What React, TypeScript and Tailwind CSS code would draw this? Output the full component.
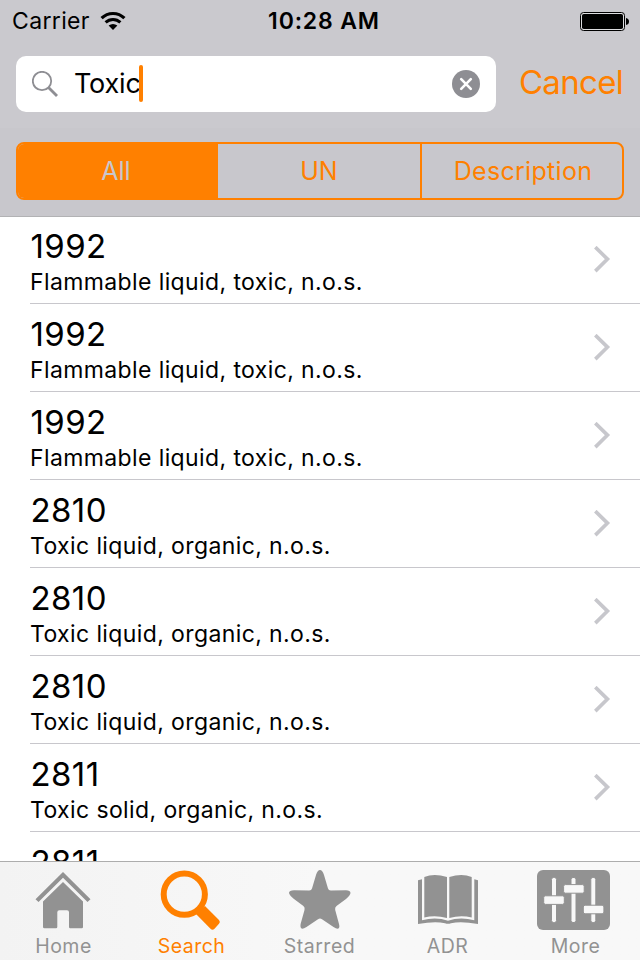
import type { ReactNode } from "react";

const results = [
  ["1992", "Flammable liquid, toxic, n.o.s."],
  ["1992", "Flammable liquid, toxic, n.o.s."],
  ["1992", "Flammable liquid, toxic, n.o.s."],
  ["2810", "Toxic liquid, organic, n.o.s."],
  ["2810", "Toxic liquid, organic, n.o.s."],
  ["2810", "Toxic liquid, organic, n.o.s."],
  ["2811", "Toxic solid, organic, n.o.s."],
  ["2811", "Toxic solid, organic, n.o.s."],
];

function StatusBar() {
  return (
    <div className="grid h-10 grid-cols-[1fr_auto_1fr] items-center pr-[11px] pl-3 text-[23px] leading-10">
      <div className="flex items-center gap-[10px]">
        <span className="w-[78px] tracking-[0.35px] whitespace-nowrap">Carrier</span>
        <svg width="26" height="20" viewBox="0 0 26 20" fill="none" stroke="#000">
          <path d="M1.6 7.2C8 .9 18 .9 24.4 7.2" strokeWidth="3.2" />
          <path d="M5.6 11.4C9.8 7.4 16.2 7.4 20.4 11.4" strokeWidth="3" />
          <path d="M8.6 14.6Q13 11.2 17.4 14.6L13 19Z" fill="#000" stroke="none" />
        </svg>
      </div>
      <span className="pl-[7px] font-semibold tracking-[0.85px]">10:28 AM</span>
      <svg className="justify-self-end" width="49" height="19" viewBox="0 0 49 19">
        <rect x=".5" y=".5" width="44" height="18" rx="3" fill="#dddde0" stroke="#000" />
        <rect x="2" y="2" width="41" height="15" rx="1.8" />
        <path d="M46 6Q49 6.5 49 9.5T46 13Z" />
      </svg>
    </div>
  );
}

function SearchRow() {
  return (
    <div className="flex h-14 items-center pr-[17px] pl-4 mt-4">
      <div className="flex h-14 w-[480px] items-center rounded-[10px] bg-white pr-4 pl-4">
        <svg width="27" height="27" viewBox="0 0 27 27" fill="none" stroke="#8e8e93">
          <circle cx="10" cy="10" r="9.2" strokeWidth="1.8" />
          <path d="M16.5 16.5L25 25" strokeWidth="2.8" />
        </svg>
        <span className="ml-[15px] w-[65px] text-[27px] leading-[54px] tracking-[-0.2px] whitespace-nowrap">Toxic</span>
        <span className="h-[37px] w-1 -mt-[2px] rounded-full bg-[#ff8000]" />
        <svg className="ml-auto" width="28" height="28" viewBox="0 0 28 28">
          <circle cx="14" cy="14" r="14" fill="#8e8e93" />
          <path d="M9.2 9.2L18.8 18.8M18.8 9.2L9.2 18.8" stroke="#fff" strokeWidth="2.6" strokeLinecap="round" />
        </svg>
      </div>
      <button className="ml-auto text-[33px] leading-[52px] -mt-1 tracking-[-0.7px] text-[#ff8000]">Cancel</button>
    </div>
  );
}

function Segments() {
  return (
    <div className="mx-4 mt-[14px] flex h-[58px] overflow-hidden rounded-[8px] border-2 border-[#ff8000] text-center text-[25px] leading-[54px] text-[#ff8000]">
      <div className="w-[200px] bg-[#ff8000] pr-1 text-[#c8c7cc]">All</div>
      <div className="w-[202px]">UN</div>
      <div className="flex-1 border-l-2 border-[#ff8000] pl-[2px] tracking-[0.3px]">Description</div>
    </div>
  );
}

function ResultRow({ number, name }: { number: string; name: string }) {
  return (
    <div className="flex h-[88px] pl-[30px]">
      <div className="flex flex-1 border-b border-[#c8c7cc] pr-[29px]">
        <div className="flex-1 pt-[10px]">
          <div className="pl-[0.5px] text-[33px] leading-10 tracking-[0.4px]">{number}</div>
          <div className="pt-px text-[23px] leading-[31px] tracking-[0.39px]">{name}</div>
        </div>
        <svg className="mt-[30px]" width="17" height="27" viewBox="0 0 17 27" fill="none" stroke="#c7c7cc" strokeWidth="3.6">
          <path d="M1.3 1.1L13.5 13.1L1.3 25.1" />
        </svg>
      </div>
    </div>
  );
}

function Tab({ label, active, x, children }: { label: string; active?: boolean; x: number; children: ReactNode }) {
  return (
    <div className={active ? "flex w-32 flex-col text-[#ff8000]" : "flex w-32 flex-col text-[#929292]"}>
      <svg className="shrink-0" width="128" height="70" viewBox={`${x} 862 128 70`} fill="currentColor">
        {children}
      </svg>
      <span className="text-center text-[19.5px] leading-7 tracking-[0.5px] pr-px">{label}</span>
    </div>
  );
}

function TabBar() {
  return (
    <nav className="flex h-[99px] shrink-0 border-t border-[#adadad] bg-linear-to-r from-[#f3f3f3] via-[#f8f8f8] to-[#f8f8f8]">
      <Tab label="Home" x={0}>
        <path d="M63 872L90.5 899.3L87.5 902L63 877.8L38.5 902L35.5 899.3Z" />
        <path d="M63 882L83 901.5V927Q83 928.3 81.7 928.3H70.3Q69 928.3 69 927V912.3Q69 910.3 67 910.3H59.3Q57.3 910.3 57.3 912.3V927Q57.3 928.3 56 928.3H44.5Q43 928.3 43 927V901.5Z" />
      </Tab>
      <Tab label="Search" active x={128}>
        <circle cx="184.3" cy="894.2" r="20.6" fill="none" stroke="currentColor" strokeWidth="6" />
        <path d="M205 906L219 920Q220.8 922 219 923.8L214.5 928.8Q212.5 930.8 210.5 928.8L195.5 913.5Z" />
      </Tab>
      <Tab label="Starred" x={256}>
        <path d="M320 870Q322.4 870 324 875L328 888.5Q328.6 890.6 331 890.5L346 890.3Q350.3 890.4 350.5 893Q350.2 895.3 346 899L336.5 906Q334.6 907.5 335.2 910L339 924Q340 927.8 338.3 928.6Q336.7 929.2 333.5 927L322 919.2Q320 917.8 318 919.2L306.5 927Q303 929.2 301.7 928.6Q300 927.8 300.6 924L304.5 910Q305.2 907.5 303.4 906L294 899Q289.5 895.3 289 893Q289.2 890.4 294 890.3L309 890.5Q311.4 890.6 312 888.5L316 875Q317.6 870 320 870Z" />
      </Tab>
      <Tab label="ADR" x={384}>
        <path d="M424.3 877Q434 873.2 447 877V918Q435 914.8 424.3 917.6Z" />
        <path d="M449.3 877Q462 873.2 471.7 877V917.6Q461 914.8 449.3 918Z" />
        <path d="M418 880.3L422 879.3V920.3Q436 916.7 448 920.8Q460 916.7 474.3 920.3V879.3L478 880.3V924Q461 920.8 451 923.2Q448 924.2 445 923.2Q435 920.8 418 924Z" />
      </Tab>
      <Tab label="More" x={512}>
        <rect x="537" y="870" width="73" height="60" rx="6" />
        <g fill="#f8f8f8" stroke="#929292">
          <rect x="551.5" y="877.5" width="5" height="45" rx="2" />
          <rect x="571" y="877.5" width="5" height="45" rx="2" />
          <rect x="590.8" y="877.5" width="5" height="45" rx="2" />
          <rect x="543.7" y="895.8" width="20.6" height="8.6" rx="1.8" />
          <rect x="563.6" y="884.6" width="20.6" height="8.6" rx="1.8" />
          <rect x="583.3" y="905.2" width="20.6" height="8.6" rx="1.8" />
        </g>
      </Tab>
    </nav>
  );
}

export default function App() {
  return (
    <div className="flex h-[960px] w-[640px] flex-col overflow-hidden bg-white font-['Inter','Liberation_Sans',sans-serif] text-black">
      <header className="h-[217px] shrink-0 border-b border-[#b2b2b4] bg-[#c8c7cc]">
        <div className="h-32 bg-[#cac9ce] pt-px">
          <StatusBar />
          <div className="-mt-px">
            <SearchRow />
          </div>
        </div>
        <Segments />
      </header>
      <main className="-mt-px min-h-0 flex-1 overflow-hidden">
        {results.map(([number, name], i) => (
          <ResultRow key={i} number={number} name={name} />
        ))}
      </main>
      <TabBar />
    </div>
  );
}
